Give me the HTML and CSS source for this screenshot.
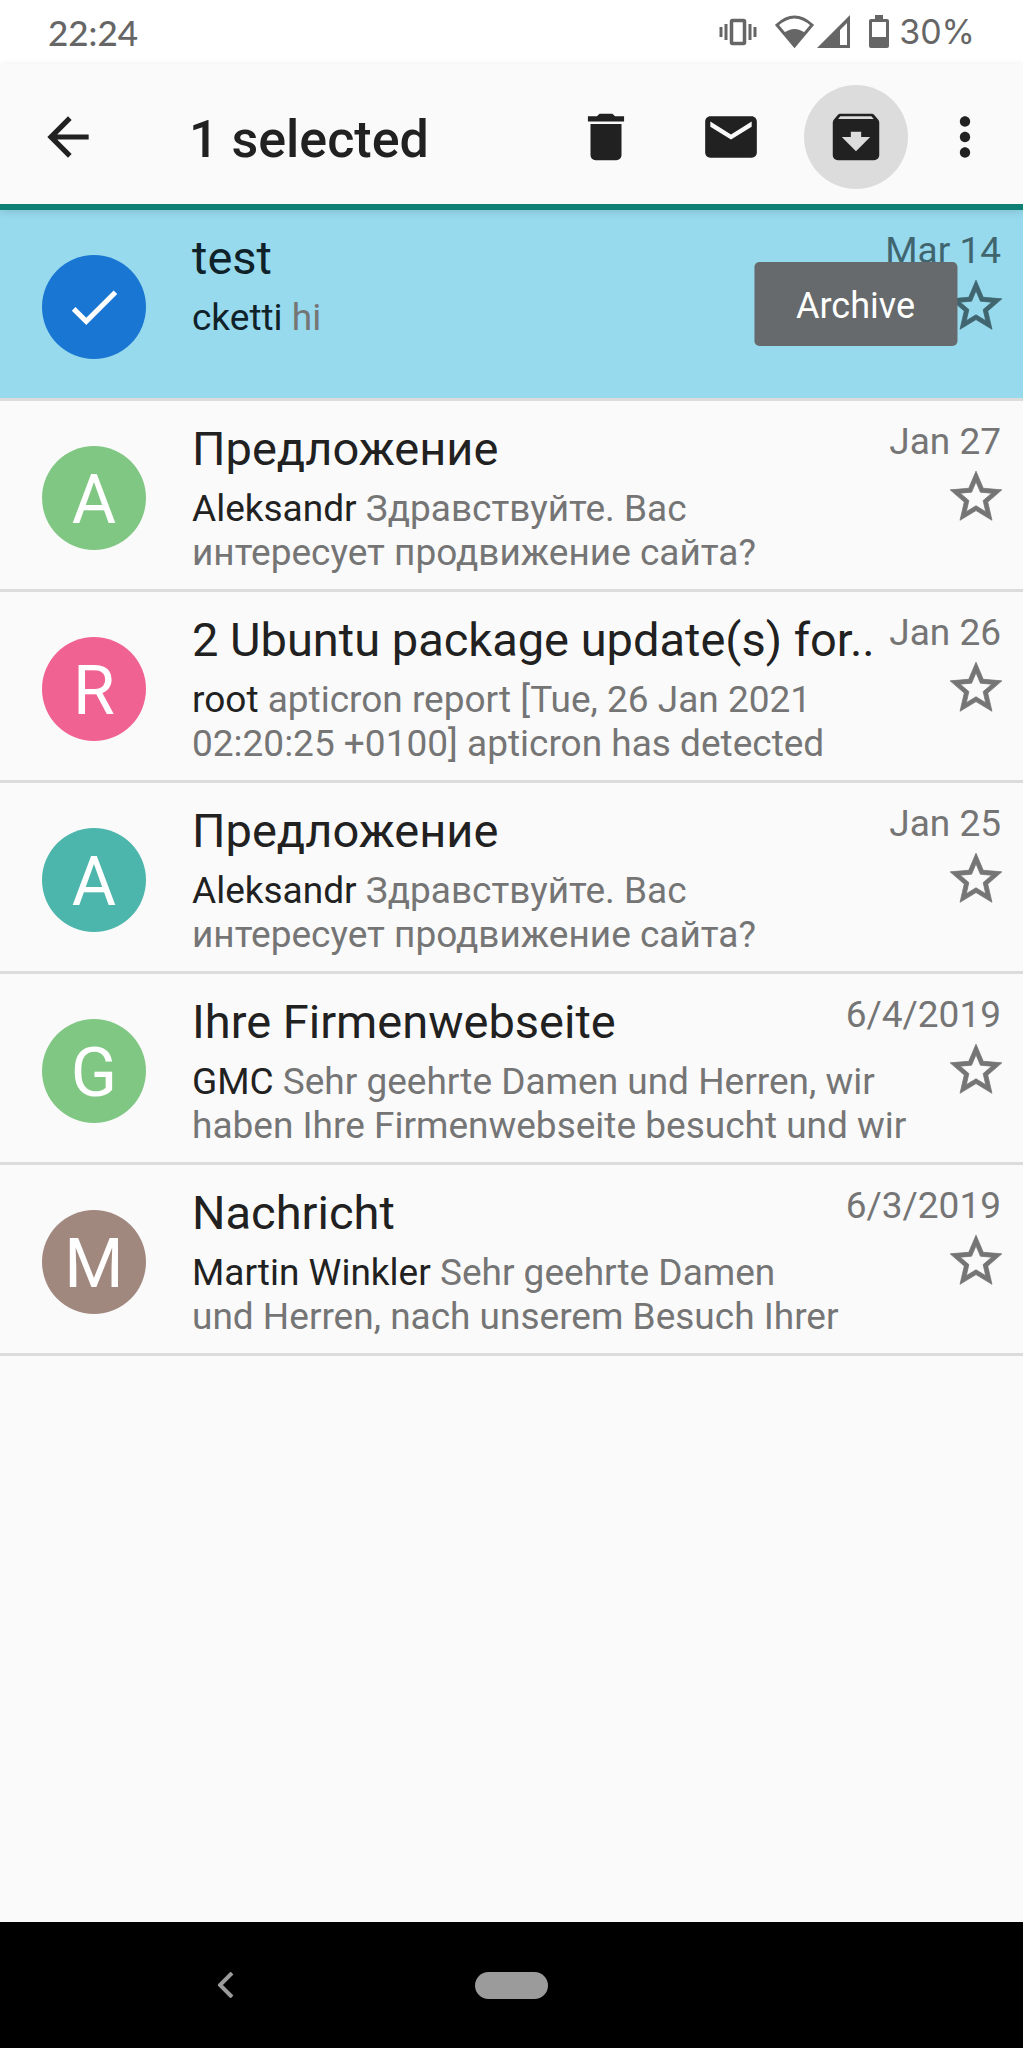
FILE: index.html
```html
<!DOCTYPE html>
<html lang="en">
<head>
<meta charset="utf-8">
<meta name="viewport" content="width=device-width, initial-scale=1">
<title>1 selected</title>
<link rel="stylesheet" href="styles.css">
</head>
<body>
<svg class="defs" aria-hidden="true">
  <symbol id="star" viewBox="0 0 24 24"><path d="M22 9.24l-7.19-.62L12 2 9.19 8.63 2 9.24l5.46 4.73L5.82 21 12 17.27 18.18 21l-1.63-7.03L22 9.24zM12 15.4l-3.76 2.27 1-4.28-3.32-2.88 4.38-.38L12 6.1l1.71 4.04 4.38.38-3.32 2.88 1 4.28L12 15.4z"/></symbol>
</svg>

<div class="status">
  <time class="clock">22:24</time>
  <div class="indicators">
    <svg class="vibrate" viewBox="0 0 38 28" width="38" height="28" aria-hidden="true"><path d="M2 9v10M7 6v16M31 6v16M36 9v10" stroke="currentColor" stroke-width="3"/><rect x="12.500" y="2.500" width="13" height="23" rx="1" fill="none" stroke="currentColor" stroke-width="3.500"/></svg>
    <svg class="wifi" viewBox="0 0 39 34" width="39" height="34" aria-hidden="true"><path d="M2 10Q19.500-6 37 10L19.500 31z" fill="none" stroke="currentColor" stroke-width="3"/><path d="M9 18q10.500-8 21 0L19.500 32z" fill="currentColor"/></svg>
    <svg class="signal" viewBox="0 0 34 34" width="34" height="34" aria-hidden="true"><path fill="currentColor" fill-rule="evenodd" d="M33 0v33H0zM30 8l-7 7v15h7z"/></svg>
    <svg class="battery" viewBox="0 0 20 34" width="20" height="34" aria-hidden="true"><path fill="currentColor" fill-rule="evenodd" d="M6 0h8v4h4q2 0 2 2v25q0 2-2 2H2q-2 0-2-2V6q0-2 2-2h4zM3 7v15h14V7z"/></svg>
    <span class="charge">30%</span>
  </div>
</div>

<header class="toolbar">
  <button class="tool back" aria-label="Back"><svg class="icon" viewBox="0 0 24 24" aria-hidden="true"><path d="M20 11H7.830l5.590-5.590L12 4l-8 8 8 8 1.410-1.410L7.830 13H20v-2z"/></svg></button>
  <h1 class="title">1 selected</h1>
  <button class="tool" aria-label="Delete"><svg class="icon" viewBox="0 0 24 24" aria-hidden="true"><path d="M6 19c0 1.100.9 2 2 2h8c1.100 0 2-.9 2-2V7H6v12zM19 4h-3.500l-1-1h-5l-1 1H5v2h14V4z"/></svg></button>
  <button class="tool" aria-label="Mark as unread"><svg class="icon" viewBox="0 0 24 24" aria-hidden="true"><path d="M20 4H4c-1.100 0-1.990.9-1.990 2L2 18c0 1.100.9 2 2 2h16c1.100 0 2-.9 2-2V6c0-1.100-.9-2-2-2zm0 4l-8 5-8-5V6l8 5 8-5v2z"/></svg></button>
  <div class="tool-wrap">
    <button class="tool" aria-labelledby="archive-tip"><span class="press"><svg class="icon" viewBox="0 0 24 24" aria-hidden="true"><path d="M20.540 5.230l-1.390-1.680C18.880 3.210 18.470 3 18 3H6c-.47 0-.88.21-1.160.55L3.460 5.230C3.170 5.570 3 6.020 3 6.500V19c0 1.100.9 2 2 2h14c1.100 0 2-.9 2-2V6.500c0-.48-.17-.93-.46-1.270zM12 17.500L6.500 12H10v-2h4v2h3.500L12 17.500zM5.120 5l.81-1h12l.94 1H5.120z"/></svg></span></button>
    <span class="tooltip" id="archive-tip" role="tooltip">Archive</span>
  </div>
  <button class="tool more" aria-label="More options"><svg class="icon" viewBox="0 0 24 24" aria-hidden="true"><path d="M12 8c1.100 0 2-.9 2-2s-.9-2-2-2-2 .9-2 2 .9 2 2 2zm0 2c-1.100 0-2 .9-2 2s.9 2 2 2 2-.9 2-2-.9-2-2-2zm0 6c-1.100 0-2 .9-2 2s.9 2 2 2 2-.9 2-2-.9-2-2-2z"/></svg></button>
</header>

<main class="list">
  <article class="message selected">
    <span class="avatar blue"><svg class="check" viewBox="0 0 24 24" aria-hidden="true"><path d="M9 16.170L4.830 12l-1.420 1.410L9 19 21 7l-1.410-1.410z"/></svg></span>
    <h2 class="subject">test</h2>
    <time class="date">Mar 14</time>
    <p class="preview"><span class="sender">cketti</span> hi</p>
    <button class="star" aria-label="Star"><svg class="icon"><use href="#star"/></svg></button>
  </article>
  <article class="message">
    <span class="avatar green">A</span>
    <h2 class="subject">Предложение</h2>
    <time class="date">Jan 27</time>
    <p class="preview"><span class="sender">Aleksandr</span> Здравствуйте. Вас<br>интересует продвижение сайта?</p>
    <button class="star" aria-label="Star"><svg class="icon"><use href="#star"/></svg></button>
  </article>
  <article class="message">
    <span class="avatar pink">R</span>
    <h2 class="subject">2 Ubuntu package update(s) for..</h2>
    <time class="date">Jan 26</time>
    <p class="preview"><span class="sender">root</span> apticron report [Tue, 26 Jan 2021<br>02:20:25 +0100] apticron has detected</p>
    <button class="star" aria-label="Star"><svg class="icon"><use href="#star"/></svg></button>
  </article>
  <article class="message">
    <span class="avatar teal">A</span>
    <h2 class="subject">Предложение</h2>
    <time class="date">Jan 25</time>
    <p class="preview"><span class="sender">Aleksandr</span> Здравствуйте. Вас<br>интересует продвижение сайта?</p>
    <button class="star" aria-label="Star"><svg class="icon"><use href="#star"/></svg></button>
  </article>
  <article class="message">
    <span class="avatar green">G</span>
    <h2 class="subject">Ihre Firmenwebseite</h2>
    <time class="date">6/4/2019</time>
    <p class="preview"><span class="sender">GMC</span> Sehr geehrte Damen und Herren, wir<br>haben Ihre Firmenwebseite besucht und wir</p>
    <button class="star" aria-label="Star"><svg class="icon"><use href="#star"/></svg></button>
  </article>
  <article class="message">
    <span class="avatar brown">M</span>
    <h2 class="subject">Nachricht</h2>
    <time class="date">6/3/2019</time>
    <p class="preview"><span class="sender">Martin Winkler</span> Sehr geehrte Damen<br>und Herren, nach unserem Besuch Ihrer</p>
    <button class="star" aria-label="Star"><svg class="icon"><use href="#star"/></svg></button>
  </article>
</main>

<nav class="navbar" aria-label="System">
  <button class="nav-button" aria-label="System back"><svg viewBox="0 0 16 26" width="16" height="26" aria-hidden="true"><path d="M14 1L2 13l12 12" fill="none" stroke="currentColor" stroke-width="4"/></svg></button>
  <button class="nav-button" aria-label="Home"><span class="pill"></span></button>
</nav>
</body>
</html>
```
FILE: styles.css
```css
* {
  box-sizing: border-box;
}

body {
  margin: 0;
  min-height: 100vh;
  display: flex;
  flex-direction: column;
  background: #fafafa;
  color: #212121;
  font-family: Roboto, sans-serif;
}

button {
  padding: 0;
  border: 0;
  background: none;
  color: inherit;
  font: inherit;
}

.defs {
  display: none;
}

.icon {
  display: block;
  width: 62px;
  height: 62px;
  fill: currentColor;
}

.status {
  height: 64px;
  padding: 0 48px;
  display: flex;
  align-items: center;
  justify-content: space-between;
  background: #fff;
  color: #666;
  font-family: Lato, sans-serif;
  font-size: 35px;
  font-weight: 500;
  line-height: 66px;
}

.charge {
  font-family: Inter, sans-serif;
  font-size: 34px;
  font-weight: 400;
}

.indicators {
  display: flex;
  align-items: center;
}

.vibrate {
  margin-right: 18px;
}

.wifi {
  margin-right: 3px;
}

.signal {
  margin-right: 18px;
}

.battery {
  margin-right: 10px;
}

.toolbar {
  position: relative;
  z-index: 1;
  height: 146px;
  padding: 0 11px 0 5px;
  display: flex;
  align-items: center;
  background: #fafafa;
  box-shadow: inset 0 -6px #0e8074, 0 2px 8px rgba(0, 0, 0, 0.12);
}

.tool {
  width: 125px;
  height: 125px;
  display: flex;
  align-items: center;
  justify-content: center;
}

.tool-wrap {
  position: relative;
}

.title {
  flex: 1;
  margin: 0 0 0 59px;
  padding-top: 5px;
  font-size: 52px;
  font-weight: 500;
  line-height: 62px;
}

.press {
  width: 104px;
  height: 104px;
  display: flex;
  align-items: center;
  justify-content: center;
  border-radius: 50%;
  background: #dcdcdc;
}

.more {
  width: 94px;
}

.tooltip {
  position: absolute;
  top: 187px;
  left: 50%;
  transform: translateX(-50%);
  padding: 23px 42px 19px;
  border-radius: 5px;
  background: #666a6c;
  color: #fff;
  font-size: 36px;
  line-height: 42px;
}

.list {
  flex: 1;
}

.message {
  padding: 20px 16px 13px 42px;
  display: grid;
  grid-template-columns: 104px 1fr auto 62px;
  grid-template-rows: 45px 21px minmax(89px, auto);
  border-bottom: 3px solid #dcdcdc;
}

.selected {
  background: #97d9ed;
  color: #0f2229;
}

.avatar {
  grid-row: 1 / -1;
  grid-column: 1;
  width: 104px;
  height: 104px;
  margin-top: 25px;
  display: flex;
  align-items: center;
  justify-content: center;
  border-radius: 50%;
  color: #fff;
  font-size: 68px;
  line-height: 80px;
}

.avatar:not(.blue) {
  padding-top: 4px;
}

.blue {
  background: #1976d2;
}

.green {
  background: #81c784;
}

.pink {
  background: #f06292;
}

.teal {
  background: #4db6ac;
}

.brown {
  background: #a1887f;
}

.check {
  width: 62px;
  height: 62px;
  fill: #fff;
}

.subject {
  grid-row: 1 / 3;
  grid-column: 2;
  margin: 0 0 0 46px;
  font-size: 47px;
  font-weight: 400;
  line-height: 56px;
  white-space: nowrap;
}

.date {
  grid-row: 1;
  grid-column: 3 / 5;
  padding-right: 6px;
  color: #757575;
  font-size: 37px;
  line-height: 42px;
  text-align: right;
}

.preview {
  grid-row: 3;
  grid-column: 2 / 4;
  margin: 0 0 0 46px;
  color: #757575;
  font-size: 37px;
  line-height: 44px;
}

.sender {
  color: #212121;
}

.selected .sender {
  color: #0f2229;
}

.star {
  grid-row: 2 / 4;
  grid-column: 4;
  align-self: start;
  color: #757575;
}

.star .icon {
  stroke: currentColor;
  stroke-width: 1px;
}

#star path {
  stroke-width: 0.3;
}

.selected .date,
.selected .star {
  color: #40656f;
}

.navbar {
  height: 126px;
  padding: 0 83px;
  display: grid;
  grid-template-columns: repeat(3, 1fr);
  background: #000;
  color: #9b9b9b;
}

.nav-button {
  display: flex;
  align-items: center;
  justify-content: center;
}

.pill {
  width: 73px;
  height: 27px;
  border-radius: 14px;
  background: #9b9b9b;
}
```
